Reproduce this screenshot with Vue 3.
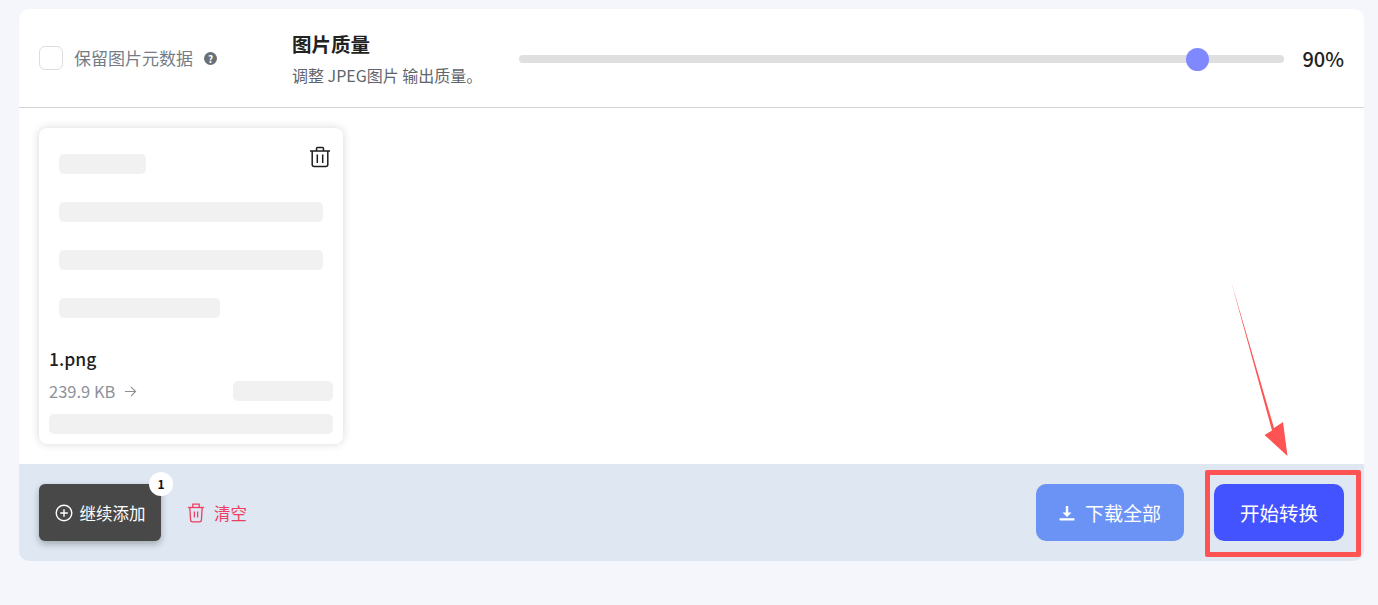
<script setup>
const bars = [
  { id: 1, w: 87 },
  { id: 2, w: 264 },
  { id: 3, w: 264 },
  { id: 4, w: 161 },
]
</script>

<template>
  <div class="page">
    <div class="panel">
      <section class="options">
        <label class="keep">
          <span class="check"></span>
          <span class="keep-label">保留图片元数据</span>
          <span class="help">?</span>
        </label>
        <div class="quality">
          <div class="q-title">图片质量</div>
          <div class="q-desc">调整 JPEG图片 输出质量。</div>
        </div>
        <div class="slider">
          <div class="thumb"></div>
        </div>
        <div class="percent">90%</div>
      </section>

      <section class="files">
        <article class="file-card">
          <svg class="card-trash" viewBox="0 0 22 22" fill="none" stroke="#1c1c1c" stroke-width="1.5">
            <path d="M1 5h20" />
            <path d="M7.5 5V2.8c0-.7.5-1.3 1.2-1.3h4.6c.7 0 1.2.6 1.2 1.3V5" />
            <path d="M3.2 5v13.5c0 1.2.8 2 2 2h11.6c1.2 0 2-.8 2-2V5" />
            <path d="M8.3 8.5v8.5M13.7 8.5v8.5" />
          </svg>
          <div class="skeletons">
            <div v-for="b in bars" :key="b.id" class="bone" :style="{ width: b.w + 'px' }"></div>
          </div>
          <div class="file-name">1.png</div>
          <div class="file-size">
            <span>239.9 KB</span>
            <svg class="arrow-right" viewBox="0 0 14 14" fill="none" stroke="#8b8f96" stroke-width="1.2">
              <path d="M1 7h11.5M7.5 2l5 5-5 5" />
            </svg>
            <div class="bone small"></div>
          </div>
          <div class="bone wide"></div>
        </article>
      </section>

      <footer class="actions">
        <button class="add">
          <svg class="plus" viewBox="0 0 18 18" fill="none" stroke="#fff" stroke-width="1.4">
            <circle cx="9" cy="9" r="7.8" />
            <path d="M9 5.2v7.6M5.2 9h7.6" />
          </svg>
          继续添加
          <span class="badge">1</span>
        </button>
        <button class="clear">
          <svg class="clear-icon" viewBox="0 0 18 20" fill="none" stroke="#ee3f62" stroke-width="1.3">
            <path d="M.8 4.5h16.4" />
            <path d="M5.8 4.5V1.2h6.4v3.3" />
            <path d="M2.8 4.5l.8 12.6c.1 1 .7 1.7 1.8 1.7h7.2c1.1 0 1.7-.7 1.8-1.7l.8-12.6" />
            <path d="M7.4 8.5v6M10.6 8.5v6" />
          </svg>
          清空
        </button>
        <div class="spacer"></div>
        <button class="download">
          <svg class="dl-icon" viewBox="0 0 16 16" fill="#fff">
            <path d="M6.8 1h2.4v6.6h3.3L8 12 3.5 7.6h3.3z" />
            <rect x="0.5" y="13.2" width="15" height="2.2" rx="0.6" />
          </svg>
          下载全部
        </button>
        <button class="start">开始转换</button>
      </footer>
    </div>

    <!-- screenshot annotations lying over the interface -->
    <div class="annot-box"></div>
    <svg class="annot-arrow" viewBox="0 0 70 190">
      <path d="M1 0 L44 147 L53 141 L57.5 175 L34.5 154 L42 149.5 Z" fill="#fd5353" />
    </svg>
  </div>
</template>

<style>
html,
body {
  margin: 0;
  background: #f4f6fb;
}
</style>

<style scoped>
.page {
  position: relative;
  width: 1378px;
  height: 605px;
  padding: 9px 14px 0 19px;
  box-sizing: border-box;
  overflow: hidden;
  background: #f4f6fb;
  font-family: "Noto Sans CJK SC", "Noto Sans", sans-serif;
}

.panel {
  width: 1345px;
  height: 552px;
  border-radius: 10px;
  overflow: hidden;
  background: #fff;
  display: flex;
  flex-direction: column;
}

.options {
  height: 99px;
  flex: none;
  box-sizing: border-box;
  border-bottom: 1px solid #d4d4d4;
  display: flex;
  align-items: center;
  padding: 0 20px;
}

.keep {
  display: flex;
  align-items: center;
  width: 253px;
  flex: none;
}

.check {
  width: 24px;
  height: 24px;
  border: 1px solid #dedede;
  border-radius: 6px;
  box-sizing: border-box;
  background: #fff;
  margin-right: 11px;
}

.keep-label {
  font-size: 17px;
  line-height: 24px;
  color: #757c85;
}

.help {
  width: 13px;
  height: 13px;
  margin-left: 11px;
  border-radius: 50%;
  background: #6a7078;
  color: #fff;
  font-size: 10px;
  line-height: 13px;
  font-weight: 700;
  text-align: center;
}

.quality {
  width: 227px;
  flex: none;
}

.q-title {
  font-size: 19.5px;
  line-height: 28px;
  font-weight: 700;
  color: #222;
  margin-bottom: 5px;
}

.q-desc {
  font-size: 16px;
  line-height: 24px;
  color: #5f656d;
  white-space: nowrap;
}

.slider {
  position: relative;
  width: 765px;
  height: 8px;
  flex: none;
  border-radius: 4px;
  background: #dfdfdf;
  margin-top: 1px;
}

.thumb {
  position: absolute;
  left: 667px;
  top: -7px;
  width: 23px;
  height: 23px;
  border-radius: 50%;
  background: #7f88ff;
}

.percent {
  margin-left: auto;
  font-size: 20px;
  line-height: 28px;
  font-weight: 500;
  color: #222;
  margin-top: 1px;
}

.files {
  flex: 1;
  padding: 20px 20px 0;
}

.file-card {
  position: relative;
  width: 304px;
  height: 316px;
  box-sizing: border-box;
  padding: 26px 10px 0;
  border-radius: 8px;
  background: #fff;
  box-shadow: 0 0 8px rgba(0, 0, 0, 0.16);
}

.card-trash {
  position: absolute;
  top: 18px;
  right: 12px;
  width: 22px;
  height: 22px;
}

.skeletons {
  height: 188px;
  padding-left: 10px;
  display: flex;
  flex-direction: column;
  gap: 28px;
}

.bone {
  height: 20px;
  border-radius: 5px;
  background: #f1f1f1;
  flex: none;
}

.file-name {
  font-size: 17.5px;
  line-height: 24px;
  font-weight: 500;
  color: #1f1f1f;
  margin-top: 5px;
}

.file-size {
  display: flex;
  align-items: center;
  height: 20px;
  margin-top: 10px;
  font-size: 16.5px;
  color: #8d9299;
}

.arrow-right {
  width: 13px;
  height: 13px;
  margin-left: 9px;
}

.bone.small {
  width: 100px;
  margin-left: auto;
}

.bone.wide {
  width: 284px;
  margin-top: 13px;
}

.actions {
  flex: none;
  height: 97px;
  box-sizing: border-box;
  background: #dee7f2;
  display: flex;
  align-items: flex-start;
  padding: 20px 20px 0;
}

button {
  border: 0;
  padding: 0;
  font-family: inherit;
  cursor: pointer;
  display: flex;
  align-items: center;
  justify-content: center;
}

.add {
  position: relative;
  width: 122px;
  height: 57px;
  border-radius: 6px;
  background: #484848;
  color: #fff;
  font-size: 16.5px;
  gap: 7px;
  box-shadow: 0 3px 7px rgba(0, 0, 0, 0.28);
}

.plus {
  width: 18px;
  height: 18px;
}

.badge {
  position: absolute;
  top: -12px;
  right: -12px;
  width: 24px;
  height: 24px;
  border-radius: 50%;
  background: #fff;
  color: #111;
  font-size: 12px;
  font-weight: 700;
  line-height: 24px;
  text-align: center;
}

.clear {
  height: 57px;
  margin-left: 26px;
  background: none;
  color: #ee3f62;
  font-size: 16.5px;
  gap: 9px;
}

.clear-icon {
  width: 18px;
  height: 20px;
}

.spacer {
  flex: 1;
}

.download {
  width: 148px;
  height: 57px;
  border-radius: 10px;
  background: #6b92f5;
  color: #fff;
  font-size: 19px;
  gap: 10px;
}

.dl-icon {
  width: 16px;
  height: 16px;
}

.start {
  width: 130px;
  height: 57px;
  margin-left: 30px;
  border-radius: 10px;
  background: #4353ff;
  color: #fff;
  font-size: 19.5px;
}

.annot-box {
  position: absolute;
  left: 1205px;
  top: 470px;
  width: 156px;
  height: 87px;
  box-sizing: border-box;
  border: 5px solid #fd5353;
  border-radius: 2px;
}

.annot-arrow {
  position: absolute;
  left: 1230px;
  top: 281px;
  width: 70px;
  height: 190px;
}
</style>
